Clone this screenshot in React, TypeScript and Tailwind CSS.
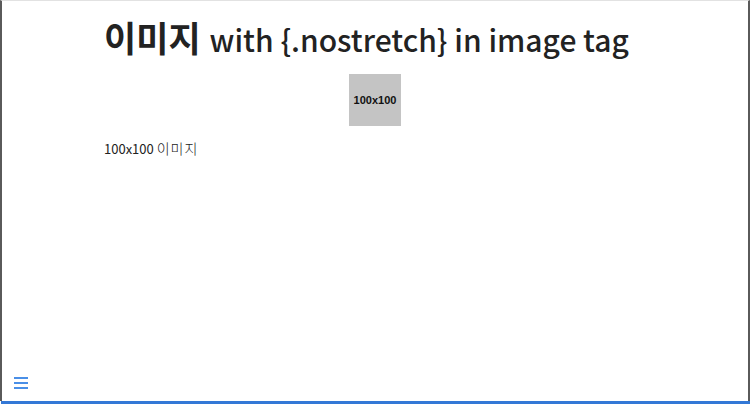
import React from "react";

export default function App() {
  return (
    <div className="w-[750px] h-[404px] flex flex-col bg-white overflow-hidden" style={{ fontFamily: '"Noto Sans CJK KR", "Noto Sans", sans-serif' }}>
      <div className="flex-1 flex flex-col border-l-2 border-r-2 border-t border-l-[#5a5a5a] border-r-[#5a5a5a] border-t-[#e2e2e2] min-h-0">
        <div className="flex-1 pl-[102px] pr-[100px] pt-[14px]">
          <h1 className="h-[44px] flex items-baseline text-[#222] whitespace-nowrap">
            <span className="font-bold text-[35px] leading-[44px]">이미지</span>
            <span className="font-medium text-[30px] leading-[44px] ml-[9px]">with {"{"}.nostretch{"}"} in image tag</span>
          </h1>
          <div className="flex justify-center mt-[15px] -ml-[102px] -mr-[100px]">
            <div className="w-[52px] h-[52px] bg-[#c4c4c4] flex items-center justify-center text-[11px] font-bold text-[#111]" style={{ fontFamily: '"Liberation Sans", Arial, sans-serif' }}>
              100x100
            </div>
          </div>
          <p className="mt-[12px] text-[13px] leading-[20px] text-[#222]">
            100x100 <span className="text-[14px] font-light tracking-[1px]">이미지</span>
          </p>
        </div>
        <div className="h-[24px] pl-[10px] flex items-start">
          <svg width="16" height="14" viewBox="0 0 16 14" className="-mt-[1px]">
            <rect x="2" y="1" width="14" height="2" fill="#4a8fe7" />
            <rect x="2" y="6" width="14" height="2" fill="#4a8fe7" />
            <rect x="2" y="11" width="14" height="2" fill="#4a8fe7" />
          </svg>
        </div>
      </div>
      <div className="h-[3px] bg-[#3378d6] ml-[1px]" />
    </div>
  );
}
